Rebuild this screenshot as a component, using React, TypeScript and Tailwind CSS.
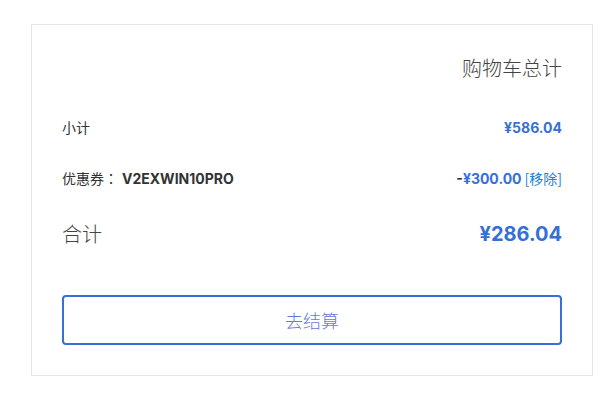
import React from 'react';

const cjk = "font-['Noto_Sans_CJK_SC',sans-serif]";
const num = "font-['Inter','Noto_Sans_CJK_SC',sans-serif]";

export default function App() {
  return (
    <div className="w-[611px] h-[403px] bg-white pt-6 pl-[31px]">
      <div className="w-[562px] h-[352px] border border-[#e6e6e6] px-[30px] pt-[29px]">
        <h2 className={`${cjk} text-right text-[20px] font-light text-[#444] leading-[28px]`}>购物车总计</h2>

        <div className="flex items-center justify-between mt-[35px] h-[20px]">
          <span className={`${cjk} text-[14px] text-[#333]`}>小计</span>
          <span className={`${num} text-[14px] font-bold text-[#3470d6]`}>¥586.04</span>
        </div>

        <div className="flex items-center justify-between mt-[31px] h-[20px]">
          <span className={`${cjk} text-[14px] text-[#333]`}>
            优惠券<span className="font-['Noto_Sans_CJK_TC',sans-serif]">：</span>
            <span className={`${num} ml-[4px] font-bold text-[14px] text-[#333]`}>V2EXWIN10PRO</span>
          </span>
          <span className={`${num} text-[14px]`}>
            <span className="font-bold text-[#333]">-</span>
            <span className="font-bold text-[#3470d6]">¥300.00</span>
            <span className={`${cjk} ml-[3px] text-[#1a7fd8]`}>[移除]</span>
          </span>
        </div>

        <div className="flex items-center justify-between mt-[32px] h-[28px]">
          <span className={`${cjk} text-[20px] font-light text-[#444]`}>合计</span>
          <span className={`${num} text-[20px] font-bold text-[#3470d6]`}>¥286.04</span>
        </div>

        <button
          className={`${cjk} mt-[47px] w-full h-[50px] border-2 border-[#3470d6] rounded-[4px] text-[18px] font-light text-[#6878d6]`}>
          去结算
        </button>
      </div>
    </div>
  );
}
